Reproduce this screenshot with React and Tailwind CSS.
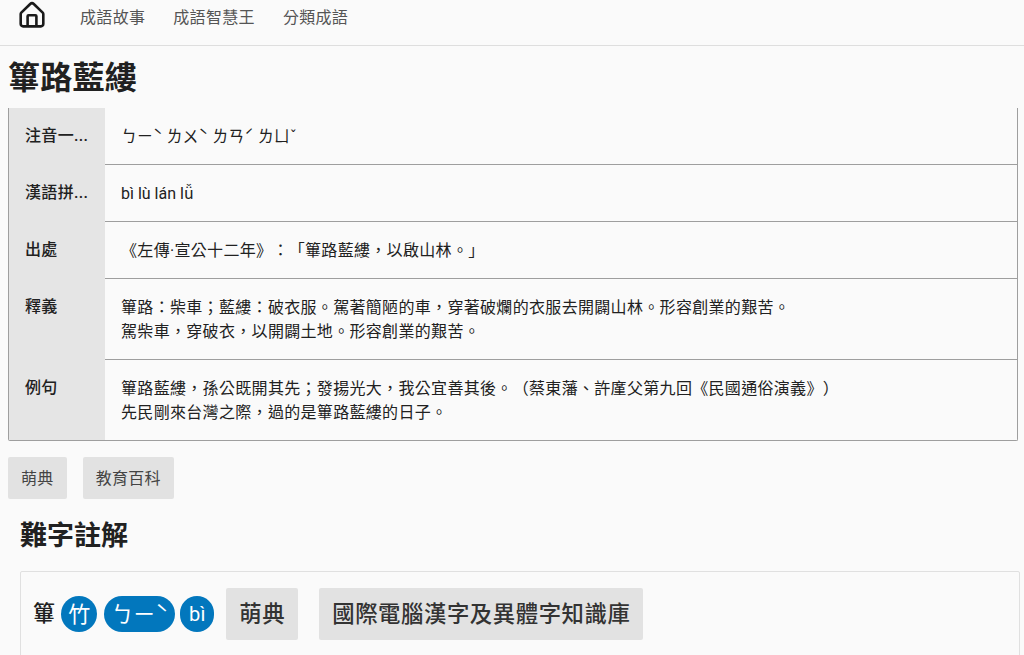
const rows = [
  { label: "注音一式", lines: ["ㄅㄧˋ ㄌㄨˋ ㄌㄢˊ ㄌㄩˇ"], tight: true },
  { label: "漢語拼音", lines: ["bì lù lán lǚ"], tight: true },
  { label: "出處", lines: ["《左傳·宣公十二年》：「篳路藍縷，以啟山林。」"] },
  {
    label: "釋義",
    lines: [
      "篳路：柴車；藍縷：破衣服。駕著簡陋的車，穿著破爛的衣服去開闢山林。形容創業的艱苦。",
      "駕柴車，穿破衣，以開闢土地。形容創業的艱苦。",
    ],
  },
  {
    label: "例句",
    lines: [
      "篳路藍縷，孫公既開其先；發揚光大，我公宜善其後。（蔡東藩、許廑父第九回《民國通俗演義》）",
      "先民剛來台灣之際，過的是篳路藍縷的日子。",
    ],
  },
];

const HomeIcon = () => (
  <svg width="26" height="27" viewBox="0 0 26 27" fill="none" stroke="#1a1a1a" strokeWidth="2.6" strokeLinejoin="round">
    <path d="M2.3 11.6 11.2 3a2.6 2.6 0 0 1 3.6 0l8.9 8.6a2 2 0 0 1 .6 1.4v10a2.4 2.4 0 0 1-2.4 2.4H4.1A2.4 2.4 0 0 1 1.7 23V13a2 2 0 0 1 .6-1.4Z" />
    <path d="M8.6 25.4V15.2a1 1 0 0 1 1-1h6.8a1 1 0 0 1 1 1v10.2" />
  </svg>
);

const App = () => {
  return (
    <div className="h-[655px] overflow-hidden bg-[#fafafa] text-[#212121] font-['Roboto','Noto_Sans_CJK_TC',sans-serif] tracking-[0.32px] [text-spacing-trim:space-all]">
      <nav className="h-[46px] flex items-start border-b border-[#dedede]">
        <div className="ml-[19px] mt-[1px]">
          <HomeIcon />
        </div>
        <div className="ml-[35px] mt-[6px] flex gap-[28px] text-[#555] leading-6">
          <span>成語故事</span>
          <span>成語智慧王</span>
          <span>分類成語</span>
        </div>
      </nav>

      <h1 className="h-[62px] pl-2 text-[32px] leading-[64px] font-bold tracking-[0.25px]">篳路藍縷</h1>

      <div className="ml-2 mr-[6px] border-x border-b border-[#9e9e9e] rounded-b-[2px]">
        {rows.map((row, i) => (
          <div key={row.label} className="flex">
            <div className="w-24 shrink-0 bg-[#e5e5e5] p-4 pr-2 font-medium leading-6 truncate">
              {row.label.length > 3 ? row.label.slice(0, 3) + "..." : row.label}
            </div>
            <div className={`flex-1 pl-4 pr-4 pt-[17px] pb-[15px] leading-6 ${row.tight ? "tracking-normal" : ""} ${i < rows.length - 1 ? "border-b border-[#9e9e9e]" : ""}`}>
              {row.lines.map((line) => (
                <div key={line}>{line}</div>
              ))}
            </div>
          </div>
        ))}
      </div>

      <div className="mx-2 mt-4 flex gap-4">
        <a className="h-[42px] px-[13px] pt-[2px] flex items-center bg-[#e2e2e2] rounded-[2px] text-[#444]">萌典</a>
        <a className="h-[42px] px-[13px] pt-[2px] flex items-center bg-[#e2e2e2] rounded-[2px] text-[#444]">教育百科</a>
      </div>

      <h2 className="ml-5 mt-[17px] text-[27px] leading-10 font-bold tracking-normal">難字註解</h2>

      <div className="ml-5 mr-1 mt-[15px] border border-[#e0e0e0] rounded-[2px] pl-3 pt-4 pb-4">
        <div className="flex items-center">
          <span className="text-[22px] font-medium leading-8">篳</span>
          <span className="ml-[6px] w-9 h-9 rounded-full bg-[#0277bd] text-white text-[22px] flex items-center justify-center">竹</span>
          <span className="ml-[7px] w-[71px] h-9 rounded-full bg-[#0277bd] text-white text-[22px] tracking-normal flex items-center justify-center whitespace-nowrap">ㄅㄧˋ</span>
          <span className="ml-[5px] w-[34px] h-9 rounded-full bg-[#0277bd] text-white text-[20px] flex items-center justify-center">bì</span>
          <a className="ml-3 h-[52px] px-[13px] pt-[2px] flex items-center bg-[#e2e2e2] rounded-[2px] text-[22.4px] font-medium text-[#333] tracking-[0.55px]">萌典</a>
          <a className="ml-[21px] h-[52px] px-[13px] pt-[2px] flex items-center bg-[#e2e2e2] rounded-[2px] text-[22.4px] font-medium text-[#333] tracking-[0.55px]">國際電腦漢字及異體字知識庫</a>
        </div>
      </div>
    </div>
  );
};

export default App;
